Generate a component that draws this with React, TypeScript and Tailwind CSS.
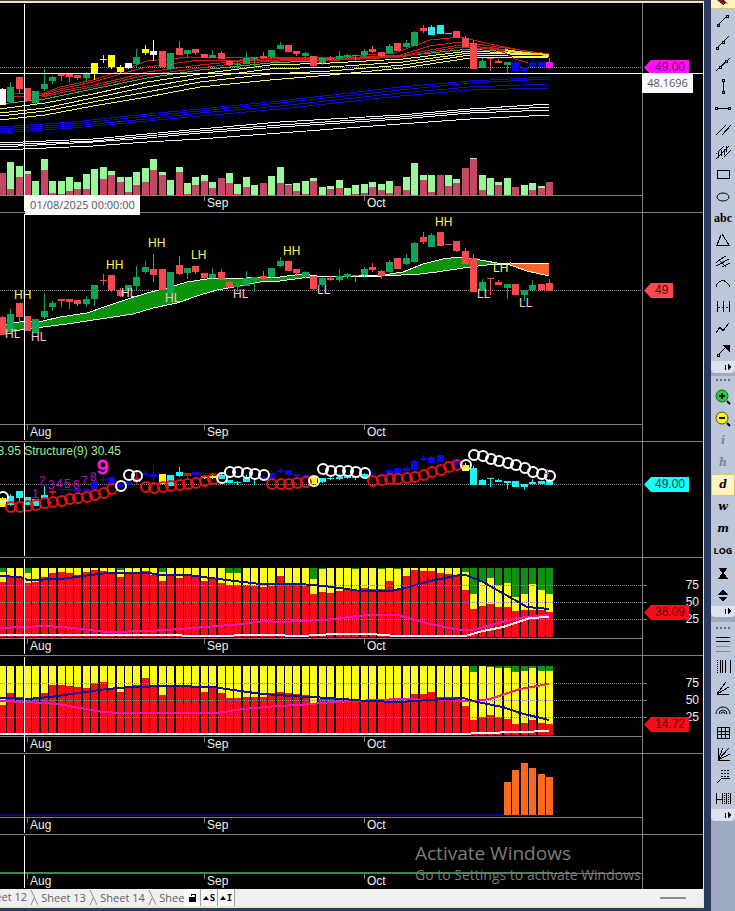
// charting workspace: stacked indicator panes with a drawing toolbar

import React from "react";

type Candle = [number, number, number, number, string]
type Point = [number, number]

const COLORS: Record<string, string> = {
    g: '#10a458',
    r: '#f84a4c',
    w: '#ffffff',
    y: '#ffff00',
    c: '#18f4f4',
    b: '#0808f0',
    m: '#ff10ff',
    d: '#c01818',
}

const PLOT_WIDTH = 642
const LAST = 65

// left edge of a bar
const barX = (i: number) => Math.round(546 - (LAST - i) * 8.42)

// high, body top, body bottom, low, direction
const candles: Candle[] = [
    [103, 104, 122, 122, 'r'], [96, 101, 119, 120, 'g'], [90, 90, 104, 110, 'r'], [103, 103, 118, 118, 'r'],
    [106, 106, 120, 121, 'g'], [80, 98, 104, 106, 'g'], [88, 90, 94, 98, 'g'], [86, 86, 88, 94, 'r'],
    [86, 86, 89, 96, 'r'], [87, 87, 91, 93, 'r'], [83, 86, 91, 94, 'g'], [72, 72, 86, 93, 'g'],
    [61, 67, 68, 72, 'r'], [62, 62, 77, 79, 'r'], [75, 77, 83, 84, 'r'], [72, 72, 78, 80, 'g'],
    [53, 64, 73, 77, 'g'], [48, 54, 59, 61, 'g'], [41, 56, 62, 69, 'r'], [56, 56, 77, 77, 'r'],
    [59, 59, 80, 81, 'g'], [43, 52, 61, 62, 'r'], [55, 55, 60, 66, 'g'], [53, 53, 59, 61, 'r'],
    [60, 60, 65, 66, 'r'], [55, 61, 65, 66, 'g'], [56, 59, 67, 67, 'r'], [68, 69, 74, 76, 'r'],
    [71, 73, 74, 79, 'g'], [58, 65, 73, 73, 'g'], [64, 64, 67, 79, 'g'], [58, 63, 66, 67, 'r'],
    [55, 55, 64, 67, 'g'], [44, 48, 53, 54, 'g'], [48, 48, 58, 58, 'r'], [56, 56, 60, 63, 'r'],
    [58, 59, 63, 66, 'g'], [63, 63, 76, 77, 'r'], [64, 65, 72, 74, 'g'], [63, 65, 67, 68, 'r'],
    [56, 63, 67, 69, 'g'], [60, 61, 64, 66, 'g'], [62, 62, 63, 69, 'r'], [54, 56, 62, 65, 'g'],
    [50, 54, 57, 59, 'r'], [57, 58, 63, 66, 'r'], [47, 49, 59, 60, 'g'], [45, 45, 56, 56, 'r'],
    [41, 45, 51, 52, 'g'], [29, 30, 49, 50, 'g'], [19, 24, 29, 31, 'r'], [20, 22, 34, 34, 'g'],
    [19, 19, 33, 33, 'r'], [31, 31, 32, 32, 'r'], [28, 28, 38, 39, 'r'], [35, 38, 51, 51, 'r'],
    [41, 45, 79, 79, 'r'], [66, 69, 78, 78, 'g'], [65, 65, 66, 82, 'r'], [67, 69, 72, 72, 'r'],
    [71, 71, 75, 86, 'g'], [71, 71, 82, 82, 'r'], [77, 77, 82, 88, 'g'], [67, 72, 77, 77, 'g'],
    [71, 71, 77, 77, 'r'], [66, 70, 78, 78, 'r'],
]

const priceColors = 'w..........yyyyw.yw................................ccc.......bbbbm'
const structureColors = 'ycccccdbbbbbbbbbdbbyccdbyycccccbbbbbbyccccccbbbbbbbbbbbycccccccccc'

// total height, sold height
const volume: Point[] = [
    [22, 22], [33, 6], [29, 18], [24, 21], [14, 0], [36, 25], [14, 2], [14, 1], [18, 4], [13, 6], [21, 6],
    [26, 0], [28, 16], [24, 20], [18, 13], [18, 3], [23, 10], [27, 13], [36, 25], [23, 20], [15, 0], [28, 23],
    [12, 1], [18, 10], [20, 14], [13, 7], [17, 17], [22, 12], [11, 1], [18, 8], [10, 0], [12, 12], [19, 0],
    [28, 12], [11, 10], [12, 4], [14, 1], [17, 14], [8, 0], [9, 6], [15, 7], [7, 0], [10, 1], [11, 2],
    [13, 8], [11, 5], [14, 2], [9, 9], [18, 5], [32, 0], [20, 15], [20, 3], [20, 20], [20, 9], [16, 12],
    [27, 27], [37, 36], [20, 5], [17, 0], [13, 10], [17, 0], [8, 8], [10, 0], [12, 5], [9, 7], [13, 13],
]

// marker height and colour for the structure pane
const rings = [
    55, 65, 65, 64, 63, 61, 60, 59, 57, 56, 55, 53, 51, 47, 44, 33, 34, 45, 46, 45, 44, 43,
    42, 41, 39, 37, 36, 30, 30, 31, 32, 33, 42, 42, 42, 41, 40, 39, 27, 29, 29, 29, 30, 31,
    39, 38, 37, 37, 36, 35, 33, 30, 28, 25, 23, 23, 13, 14, 17, 19, 21, 23, 26, 30, 32, 34,
]
const ringColors = 'wrrrrrrrrrrrrrwwwrrrrrrrrrwwwwwwrrrrrwwwwwwwrrrrrrrrrrrwwwwwwwwwww'

// green depth, depth where red starts
const fastMix: Point[] = [
    [4, 14], [0, 9], [0, 10], [5, 15], [0, 14], [0, 9], [0, 5], [0, 4], [0, 5], [0, 7], [0, 4],
    [0, 2], [0, 3], [0, 4], [2, 9], [0, 4], [0, 4], [0, 3], [0, 7], [4, 13], [0, 8], [0, 10],
    [0, 7], [0, 9], [0, 13], [0, 11], [0, 15], [5, 17], [5, 17], [0, 17], [0, 18], [0, 19], [0, 18],
    [0, 8], [0, 17], [0, 16], [0, 18], [11, 26], [1, 24], [0, 25], [0, 23], [0, 22], [1, 23], [0, 20],
    [0, 21], [1, 21], [0, 13], [1, 22], [0, 8], [0, 2], [0, 3], [0, 3], [0, 5], [0, 6], [0, 8],
    [4, 22], [26, 41], [14, 38], [10, 36], [17, 39], [15, 39], [29, 43], [26, 42], [16, 42], [22, 42], [26, 44],
]

const slowMix: Point[] = [
    [0, 39], [0, 27], [0, 31], [0, 34], [0, 32], [0, 27], [0, 19], [0, 19], [0, 20], [0, 21], [0, 22],
    [0, 17], [0, 16], [0, 22], [0, 26], [0, 22], [0, 19], [0, 12], [0, 19], [0, 29], [0, 20], [0, 20],
    [0, 19], [0, 20], [0, 26], [0, 22], [0, 27], [0, 32], [0, 32], [0, 31], [0, 31], [0, 31], [0, 27],
    [0, 26], [0, 27], [0, 28], [0, 29], [0, 37], [0, 33], [0, 33], [0, 33], [0, 34], [0, 34], [0, 34],
    [0, 34], [0, 34], [0, 33], [0, 33], [0, 32], [0, 28], [0, 28], [0, 26], [0, 31], [0, 31], [0, 31],
    [0, 40], [6, 54], [0, 51], [1, 49], [2, 51], [2, 53], [6, 58], [5, 57], [2, 54], [5, 57], [5, 58],
]

const priceLines: { color: string, points: string[] }[] = [
    {
        color: '#0c0cd0',
        points: [
            '0,124 73,119 147,111 200,106 280,98 400,84 470,78 549,74',
            '0,126 73,121 147,113 200,108 280,100 400,87 470,80 549,76',
            '0,128 73,123 147,116 200,110 280,103 400,90 470,84 549,81',
            '0,130 73,125 147,118 200,113 280,106 400,93 470,87 549,85',
        ],
    },
    {
        color: '#f4f4ff',
        points: [
            '0,140 93,136 147,131 200,126 280,119 400,112 470,106 549,101',
            '0,142 93,138 147,133 200,128 280,122 400,114 470,108 549,104',
            '0,144 93,139 147,135 200,130 280,124 400,116 470,110 549,107',
            '0,147 93,143 147,139 200,136 280,130 400,121 470,116 549,112',
        ],
    },
    {
        color: '#f8f880',
        points: [
            '0,106 45,100 93,91 147,79 200,71 270,62 330,60 403,56 470,48 549,52',
            '0,110 45,105 93,95 147,84 200,75 270,66 330,64 403,59 470,50 549,52',
            '0,113 45,108 93,99 147,89 200,79 270,71 330,68 403,62 470,52 549,54',
            '0,117 45,112 93,103 147,94 200,84 270,77 330,72 403,65 470,55 549,54',
        ],
    },
    {
        color: '#40b050',
        points: ['0,101 45,96 93,86 147,75 200,67 270,60 330,57 403,53 440,49 470,46 549,52'],
    },
    {
        color: '#d01c18',
        points: [
            '12,90 42,91 60,84 93,77 120,68 147,58 190,54 230,55 270,54 340,54 395,50 430,37 460,34 490,41 549,53',
            '12,94 42,92 60,86 93,79 120,71 147,64 200,57 240,57 280,55 340,55 400,52 430,43 460,39 490,43 549,51',
            '42,93 60,88 93,82 120,76 147,69 200,62 240,58 280,57 340,56 400,53 430,47 460,42 490,45 549,52',
            '42,94 60,90 93,84 147,72 200,65 240,60 280,58 340,57 400,54 430,49 460,44 490,46 549,53',
            '490,44 505,50 515,56 528,60',
        ],
    },
]

const bandTop = '0,112 20,109 43,108 60,104 87,100 107,93 128,86 147,80 167,75 187,69 207,66 247,65 280,64 302,61 317,63 330,64 383,62 403,59 423,51 443,46 460,44 480,47 503,51'
const bandBottom = '0,120 20,117 43,114 67,111 100,106 133,101 153,95 177,90 200,82 217,77 240,73 260,69 280,68 302,65 317,64 383,63 420,61 437,59 450,57 470,54 487,52 503,51'

const swings: [string, number, number][] = [
    ['HH', 14, 86], ['HH', 106, 56], ['HH', 148, 34], ['LH', 191, 46], ['HL', 5, 125], ['HL', 31, 128],
    ['HL', 121, 84], ['HL', 165, 89], ['HL', 233, 85], ['HH', 283, 42], ['LL', 317, 81], ['HH', 435, 13],
    ['LL', 477, 85], ['LH', 493, 59], ['LL', 519, 94],
]

const counts: [string, number, number][] = [
    ['1', 32, 56], ['2', 39, 43], ['3', 48, 47], ['4', 56, 46], ['5', 64, 46], ['6', 73, 47], ['7', 81, 43], ['8', 90, 39],
]

const months: [string, number][] = [['Aug', 27], ['Sep', 204], ['Oct', 364]]

const reverse = (points: string) => points.split(' ').reverse().join(' ')

const Candles = ({ scale, colors }: { scale: (y: number) => number, colors?: string }) => (
    <g>
        {candles.map(([high, top, bottom, low, side], i) => {
            const key = colors && colors[i] !== '.' ? colors[i] : side
            const fill = COLORS[key]
            const x = barX(i)
            const y = Math.round(scale(top))
            const wick = Math.round(scale(high))
            return (
                <g key={i} fill={fill}>
                    <rect x={x + 3} y={wick} width={1} height={Math.max(1, Math.round(scale(low)) - wick)} />
                    <rect x={x} y={y} width={7} height={Math.max(1, Math.round(scale(bottom)) - y)} />
                </g>
            )
        })}
    </g>
)

const Dotted = ({ y }: { y: number }) => (
    <line x1={-2000} x2={642} y1={y} y2={y} stroke="#8c8c94" strokeDasharray="1 1" />
)

const Line = ({ points, color, width = 2 }: { points: string, color: string, width?: number }) => (
    <polyline points={points} fill="none" stroke={color} strokeWidth={width} />
)

const Mix = ({ data }: { data: Point[] }) => (
    <g>
        {data.map(([green, red], i) => (
            <g key={i}>
                <rect x={barX(i)} y={10} width={7} height={69} fill="#fcfc20" />
                <rect x={barX(i)} y={10} width={7} height={green} fill="#109010" />
                <rect x={barX(i)} y={10 + red} width={7} height={69 - red} fill="#f80c18" />
            </g>
        ))}
    </g>
)

// price marker on the right scale
const Tag = ({ children, className }: { children: React.ReactNode, className: string }) => (
    <span
        className={`absolute left-px h-[15px] pl-[11px] pr-1 text-xs leading-[15px] [clip-path:polygon(0_50%,7px_0,100%_0,100%_100%,7px_100%)] ${className}`}
    >
        {children}
    </span>
)

interface PaneProps {
    label: string
    plot: number
    strip?: number
    skipAug?: boolean
    last?: boolean
    scale?: React.ReactNode
    overlay?: React.ReactNode
    children: React.ReactNode
}

const Pane = ({ label, plot, strip = 16, skipAug, last, scale, overlay, children }: PaneProps) => {
    const height = strip ? plot + 1 + strip : plot
    return (
        <section aria-label={label} className={`relative flex bg-black ${last ? '' : 'border-b border-[#808080]'}`}>
            <div className="flex min-w-0 flex-1 justify-end overflow-hidden">
                <svg
                    className="shrink-0 overflow-visible"
                    width={PLOT_WIDTH}
                    height={height}
                    shapeRendering="crispEdges"
                >
                    {strip > 0 && <rect x={-2000} y={plot} width={2642} height={1} fill="#808080" />}
                    {strip > 0 && months.filter(([m]) => !(skipAug && m === 'Aug')).map(([month, x]) => (
                        <g key={month}>
                            <rect x={x} y={plot + 1} width={1} height={5} fill="#808080" />
                            <text x={x + 3} y={plot + 12} fontSize={12} fill="#f0f0f0">{month}</text>
                        </g>
                    ))}
                    {children}
                    <rect x={24} y={1} width={1} height={height - 2} fill="#ffffff" />
                </svg>
            </div>
            <div className="relative w-[61px] shrink-0 border-l border-[#808080]">{scale}</div>
            {overlay}
        </section>
    )
}

const PercentScale = () => (
    <ul className="flex flex-col pt-[19px] text-right text-xs leading-[17px] text-[#f0f0f0]">
        {[75, 50, 25].map((n) => (
            <li key={n} className="flex items-center justify-between pr-[4px]">
                <span className="h-px w-1 bg-[#808080]"></span>
                {n}
            </li>
        ))}
    </ul>
)

const Node = ({ x, y }: { x: number, y: number }) => (
    <rect x={x - 1} y={y - 1} width={2} height={2} fill="#bcc7d9" stroke="#000" />
)

const Glyph = ({ children, className }: { children: React.ReactNode, className: string }) => (
    <span className={`leading-[22px] ${className}`}>{children}</span>
)

const svgIcon = (body: React.ReactNode, smooth = false) => (
    <svg
        width="24"
        height="22"
        viewBox="0 0 24 22"
        fill="none"
        stroke="#000"
        shapeRendering={smooth ? 'auto' : 'crispEdges'}
    >
        {body}
    </svg>
)

type Tool = { name: string, icon: React.ReactNode, active?: boolean }

const drawingTools: Tool[] = [
    { name: 'Segment', icon: svgIcon(<><path d="M7 16 L16 7" /><Node x={7} y={16} /><Node x={16} y={7} /></>) },
    { name: 'Ray', icon: svgIcon(<><path d="M6 17 L18 5" /><Node x={6} y={17} /><Node x={12} y={11} /></>) },
    { name: 'Extended line', icon: svgIcon(<><path d="M5 18 L19 5" /><Node x={9} y={14} /><Node x={15} y={8} /></>) },
    { name: 'Vertical line', icon: svgIcon(<><path d="M12 5 V17" /><Node x={12} y={5} /><Node x={12} y={17} /></>) },
    { name: 'Horizontal line', icon: svgIcon(<><path d="M5 11 H18" /><Node x={5} y={11} /><Node x={18} y={11} /></>) },
    { name: 'Parallel lines', icon: svgIcon(<path d="M5 16 L15 6 M11 16 L20 6" />) },
    {
        name: 'Regression channel',
        icon: svgIcon(
            <>
                <path d="M5 13 L13 5 M11 18 L20 9" strokeDasharray="2 1" />
                <path d="M5 18 L18 5 M7 11 V17 M10 9 V15 M13 8 V14 M15 5 V11" />
            </>
        ),
    },
    { name: 'Rectangle', icon: svgIcon(<rect x="6" y="7" width="12" height="8" />) },
    { name: 'Ellipse', icon: svgIcon(<ellipse cx="12" cy="12" rx="6" ry="4" />, true) },
    { name: 'Text', icon: <Glyph className="font-['Liberation_Serif',serif] text-[12px] font-bold">abc</Glyph> },
    { name: 'Triangle', icon: svgIcon(<path d="M10 6 L6 16 H18 L11 5" />) },
    { name: 'Pitchfork', icon: svgIcon(<path d="M8 9 L15 5 M5 15 L18 8 M11 16 L19 12 M5 12 L8 9 M8 9 L15 16" />) },
    { name: 'Arc', icon: svgIcon(<path d="M5 14 V12 L8 9 Q12 6 15 9 L18 12 V14" />) },
    {
        name: 'Cycles',
        icon: svgIcon(<><path d="M6 6 V17 M12 6 V17 M18 6 V17" /><path d="M7 12 H17" strokeDasharray="2 2" /></>),
    },
    { name: 'Zigzag', icon: svgIcon(<path d="M5 16 L9 10 L12 14 L18 6" />) },
    {
        name: 'Arrow',
        icon: svgIcon(<><path d="M7 16 L15 8" /><path d="M12 6 H18 V12 Z" fill="#000" /><Node x={7} y={16} /></>),
    },
]

const letter = "font-['DejaVu_Serif',serif] text-[11px] font-bold italic"

const viewTools: Tool[] = [
    {
        name: 'Zoom in',
        icon: svgIcon(
            <><path d="M16 15 L19 18" strokeWidth="2" /><circle cx="11" cy="10" r="6" fill="#18d830" stroke="#305030" /><path d="M8 10 H14 M11 7 V13" strokeWidth="2" /></>,
            true
        ),
    },
    {
        name: 'Zoom out',
        icon: svgIcon(
            <><path d="M16 15 L19 18" strokeWidth="2" /><circle cx="11" cy="10" r="6" fill="#f8f020" stroke="#505030" /><path d="M8 10 H14" strokeWidth="2" /></>,
            true
        ),
    },
    { name: 'Intraday', icon: <Glyph className={`${letter} text-[#7c8492]`}>i</Glyph> },
    { name: 'Hourly', icon: <Glyph className={`${letter} text-[#7c8492]`}>h</Glyph> },
    { name: 'Daily', active: true, icon: <Glyph className={letter}>d</Glyph> },
    { name: 'Weekly', icon: <Glyph className={letter}>w</Glyph> },
    { name: 'Monthly', icon: <Glyph className={letter}>m</Glyph> },
    { name: 'Log scale', icon: <Glyph className="font-['Open_Sans',sans-serif] text-[9px] font-bold">LOG</Glyph> },
    { name: 'Compress', icon: svgIcon(<path d="M8 6 H16 L12 11 Z M12 11 L8 16 H16 Z" fill="#000" />) },
    { name: 'Expand', icon: svgIcon(<path d="M12 6 L16 10 H8 Z M8 13 H16 L12 17 Z" fill="#000" />) },
]

const studyTools: Tool[] = [
    {
        name: 'Retracement',
        icon: svgIcon(<><path d="M5 4 H19 M5 8 H19" /><path d="M5 13 H19 M5 18 H19" stroke="#808894" /></>),
    },
    {
        name: 'Time zones',
        icon: svgIcon(<><path d="M6 5 V18" strokeDasharray="1 1" /><path d="M9 5 V18 M11 5 V18 M14 5 V18 M19 5 V18" /></>),
    },
    { name: 'Fan', icon: svgIcon(<path d="M6 17 L15 5 M6 17 L18 10 M6 17 H18" />) },
    {
        name: 'Arcs',
        icon: svgIcon(<path d="M5 15 A7 7 0 0 1 19 15 M8 15 A4 4 0 0 1 16 15 M10 15 A2 2 0 0 1 14 15" />, true),
    },
    { name: 'Grid', icon: svgIcon(<path d="M6 6 H18 V17 H6 Z M10 6 V17 M14 6 V17 M6 10 H18 M6 13 H18" />) },
    { name: 'Gann fan', icon: svgIcon(<path d="M7 5 V17 H19 M7 17 L12 5 M7 17 L18 5 M7 17 L19 11" />) },
    {
        name: 'Speed lines',
        icon: svgIcon(<><path d="M6 18 L11 13 H19" /><path d="M10 5 H19 M10 8 H19 M10 11 H19" strokeDasharray="2 1" /></>),
    },
    {
        name: 'Extension',
        icon: svgIcon(<><path d="M5 6 V17 M5 12 H11 M11 6 V17 M15 6 V17 M19 6 V17" /><path d="M13 6 V17 M17 6 V17" strokeDasharray="1 1" /></>),
    },
]

const ToolButton = ({ tool }: { tool: Tool }) => (
    <button
        type="button"
        aria-label={tool.name}
        className={`flex h-[22px] w-full items-center justify-center overflow-hidden ${tool.active ? 'border border-[#e5c365] bg-[#fdf4bf]' : ''}`}
    >
        {tool.icon}
    </button>
)

const More = ({ className }: { className: string }) => (
    <button
        type="button"
        aria-label="Toolbar options"
        className={`flex w-full items-center justify-end rounded-b bg-[#dce2ee] pr-[3px] ${className}`}
    >
        <svg width="7" height="7" shapeRendering="crispEdges"><path d="M0 1 h1 v5 h-1z M3 0 L6 3 L3 7z" /></svg>
    </button>
)

const Grip = ({ className }: { className: string }) => (
    <div className={`flex justify-center gap-[2px] bg-[#bcc7d9] ${className}`}>
        {[0, 1, 2, 3].map((n) => <i key={n} className="h-[2px] w-[2px] bg-[#5d6b88]"></i>)}
    </div>
)

const Toolbar = () => (
    <aside className="w-6 shrink-0 overflow-hidden bg-[#9ca9c0]">
        <button
            type="button"
            aria-label="Pointer"
            className="flex h-[9px] w-full items-start justify-center border-b border-[#e5c365] bg-[#fdf4bf]"
        >
            <svg width="12" height="6" viewBox="0 0 12 6">
                <path d="M0 0 L7 0 L11 4 L8 3 L6 5 Z" fill="#701818" />
                <path d="M6 5 L8 3" stroke="#000" />
            </svg>
        </button>
        <div className="bg-[#bcc7d9]">
            {drawingTools.map((t) => <ToolButton key={t.name} tool={t} />)}
        </div>
        <More className="mb-[3px] h-3" />
        <Grip className="h-[10px] pt-[3px]" />
        <div className="bg-[#bcc7d9]">
            {viewTools.map((t) => <ToolButton key={t.name} tool={t} />)}
        </div>
        <More className="mb-[5px] h-[11px]" />
        <Grip className="h-[11px] pt-[5px]" />
        <div className="bg-[#bcc7d9]">
            {studyTools.map((t) => <ToolButton key={t.name} tool={t} />)}
        </div>
        <More className="h-3" />
    </aside>
)

const Slant = () => (
    <svg className="shrink-0" width="8" height="17" fill="none" stroke="#8c8c8c">
        <path d="M1 1 L8 16" />
        <path d="M1 16 L4 9" />
    </svg>
)

const SheetTabs = () => (
    <nav className="flex h-[17px] items-stretch bg-[#f0f0f0] font-['Open_Sans','Noto_Sans',sans-serif] text-[11px] leading-[16px] text-[#606060]">
        <div className="flex w-[184px] shrink-0 overflow-hidden">
            <button type="button" className="flex w-[30px] shrink-0 justify-end overflow-hidden whitespace-nowrap pr-[3px]">Sheet 12</button>
            <Slant />
            <button type="button" className="w-[51px] shrink-0 whitespace-nowrap">Sheet 13</button>
            <Slant />
            <button type="button" className="w-[51px] shrink-0 whitespace-nowrap">Sheet 14</button>
            <Slant />
            <button type="button" className="w-[51px] shrink-0 whitespace-nowrap">Sheet 15</button>
        </div>
        <button type="button" aria-label="Lock" className="flex w-[17px] items-center justify-center border-r border-[#a0a0a0] bg-white">
            <svg width="9" height="9" shapeRendering="crispEdges">
                <path d="M1 4 h7 v5 h-7z" />
                <path d="M3 3 V1 H7 V4" fill="none" stroke="#000" />
            </svg>
        </button>
        {['S', 'I'].map((t) => (
            <button
                key={t}
                type="button"
                className="flex w-[17px] items-center justify-center gap-px border-r border-[#a0a0a0] bg-[#f8f8f8] font-['DejaVu_Sans_Mono',monospace] text-[9px] font-bold text-black"
            >
                <svg width="6" height="4"><path d="M0 4 L3 0 L6 4z" /></svg>
                {t}
            </button>
        ))}
        <div className="flex flex-1 items-center justify-end pr-[17px]">
            <div className="h-[2px] w-[26px] bg-[#8c8c8c]"></div>
        </div>
    </nav>
)

const App = () => {
    const logScale = (y: number) => {
        const d = y - 77
        return 64 + d * 0.791 + d * d * 0.001067
    }

    return (
        <div className="flex min-h-screen bg-[#2c3c60] font-['Liberation_Sans',Arial,sans-serif]">
            <main className="mr-[7px] min-w-0 flex-1 self-start border-t border-[#4c3c38]">
                <div className="relative border-r border-t-2 border-b-2 border-[#f0e4cc]">
                    <Pane
                        label="Price"
                        plot={192}
                        skipAug
                        scale={<Tag className="top-[57px] bg-[#ff10ff] text-[#700070]">49.00</Tag>}
                        overlay={
                            <>
                                <div className="absolute inset-x-0 top-[70px] h-px bg-white"></div>
                                <div className="absolute right-[10px] top-[71px] h-[19px] w-[51px] bg-[#fafafa] text-center font-['Open_Sans','Noto_Sans',sans-serif] text-[11px] leading-[18px] text-[#585858]">
                                    48.1696
                                </div>
                                <div className="absolute left-[25px] top-48 z-10 h-5 w-[115px] bg-[#f8f8f8] text-center font-['Open_Sans','Noto_Sans',sans-serif] text-[11px] leading-[19px] text-[#585858]">
                                    01/08/2025 00:00:00
                                </div>
                            </>
                        }
                    >
                        <Dotted y={64} />
                        {priceLines.map(({ color, points }) =>
                            points.map((p) => <Line key={p} points={p} color={color} width={1} />)
                        )}
                        <Line points="505,47 525,50 549,52" color="#f8e000" />
                        <Candles scale={logScale} colors={priceColors} />
                        {volume.map(([total, sold], i) => (
                            <g key={i}>
                                <rect x={barX(i)} y={192 - total} width={7} height={total} fill="#98f898" />
                                <rect x={barX(i)} y={192 - sold} width={7} height={sold} fill="#c44864" />
                            </g>
                        ))}
                    </Pane>

                    <Pane
                        label="Swing structure"
                        plot={211}
                        scale={<Tag className="top-[70px] bg-[#f84a4c] pr-[5px] text-[#4c0808]">49</Tag>}
                    >
                        <Dotted y={77} />
                        <polygon points={`${bandTop} ${reverse(bandBottom)}`} fill="#089408" />
                        <polygon points="503,51 510,50 549,51 549,63 527,58 510,52" fill="#ff6428" />
                        <Line points={bandTop} color="#ffffff" width={1} />
                        <Line points={bandBottom} color="#ffffff" width={1} />
                        <Line points="503,51 510,50 549,51" color="#ffffff" width={1} />
                        <Line points="503,51 510,52 527,58 549,63" color="#ffffff" width={1} />
                        <Candles scale={(y) => y} />
                        {swings.map(([text, x, y]) => (
                            <text
                                key={`${x}-${y}`}
                                x={x}
                                y={y}
                                fontSize={12}
                                fill={text[1] === 'H' ? '#f8f850' : '#f8c8d0'}
                            >
                                {text}
                            </text>
                        ))}
                    </Pane>

                    <Pane
                        label="Structure"
                        plot={115}
                        strip={0}
                        scale={<Tag className="top-[35px] bg-[#18fcfc] text-[#084848]">49.00</Tag>}
                    >
                        <Dotted y={42} />
                        <text x={121} y={13} textAnchor="end" fontSize={12} fill="#90ee90">8.95 Structure(9) 30.45</text>
                        <Candles scale={(y) => 42 + (y - 77) / 2} colors={structureColors} />
                        {rings.map((y, i) => (
                            <circle
                                key={i}
                                cx={barX(i) + 4}
                                cy={y}
                                r={5}
                                fill="none"
                                stroke={ringColors[i] === 'w' ? '#ffffff' : '#e81014'}
                                strokeWidth={2}
                                shapeRendering="auto"
                            />
                        ))}
                        {counts.map(([n, x, y]) => (
                            <text key={n} x={x} y={y} fontSize={12} fill="#c010c0">{n}</text>
                        ))}
                        <text x={97} y={32} fontSize={21} fill="#f020e0" stroke="#f020e0">9</text>
                        <path d="M547 27 V35 M545 31 H549" stroke="#e020c0" />
                    </Pane>

                    <Pane
                        label="Fast trend mix"
                        plot={80}
                        scale={<><PercentScale /><Tag className="top-[47px] bg-[#f80c18] text-[#600000]">36.09</Tag></>}
                    >
                        <Mix data={fastMix} />
                        <Dotted y={27} />
                        <Dotted y={44} />
                        <Dotted y={61} />
                        <Line color="#101090" points="0,18 20,19 28,22 60,21 107,15 148,15 163,17 187,17 227,22 260,26 300,26 333,29 360,33 390,33 405,30 430,23 460,17 466,17 483,24 527,49 549,51" />
                        <Line color="#ff10b0" points="0,70 47,68 73,70 107,74 150,73 180,71 243,66 263,63 280,64 325,62 367,57 397,57 430,66 460,72 473,72 517,60 549,57" />
                        <Line color="#fff0f4" points="0,77 163,77 200,78 270,77 300,78 335,76 370,76 397,78 465,78 483,73 503,69 530,60 549,59" />
                    </Pane>

                    <Pane
                        label="Slow trend mix"
                        plot={80}
                        scale={<><PercentScale /><Tag className="top-[61px] bg-[#f80c18] text-[#600000]">14.72</Tag></>}
                    >
                        <Mix data={slowMix} />
                        <Dotted y={27} />
                        <Dotted y={44} />
                        <Dotted y={61} />
                        <Line color="#ff10b0" points="0,45 28,46 57,48 103,56 120,57 217,57 243,53 277,50 300,49 333,46 400,43 430,44 475,45 490,43" />
                        <Line color="#e83070" points="490,43 520,33 549,28" />
                        <Line color="#101090" points="0,42 28,43 50,41 107,33 130,31 170,30 213,31 240,35 263,38 290,40 330,42 367,45 400,46 430,44 463,42 477,46 503,51 520,57 549,64" />
                        <Line color="#fff0f4" points="0,78 463,78 480,77 520,76 549,75" />
                    </Pane>

                    <Pane label="Signal" plot={63}>
                        <rect x={-2000} y={60} width={2549} height={2} fill="#08088c" />
                        {[28, 16, 9, 14, 20, 23].map((y, i) => (
                            <rect key={i} x={barX(60 + i)} y={y} width={7} height={61 - y} fill="#ff6a20" />
                        ))}
                    </Pane>

                    <Pane label="Baseline" plot={38} strip={15} last>
                        <rect x={-2000} y={37} width={2553} height={2} fill="#408848" />
                    </Pane>

                    <SheetTabs />

                    <div className="pointer-events-none absolute bottom-[21px] right-[52px] w-[236px] whitespace-nowrap font-['Open_Sans','Noto_Sans',sans-serif] text-[#7c7c7c]">
                        <p className="text-[19px] leading-6">Activate Windows</p>
                        <p className="text-[14px] leading-5">Go to Settings to activate Windows.</p>
                    </div>
                </div>
            </main>
            <Toolbar />
        </div>
    );
}

export default App;
